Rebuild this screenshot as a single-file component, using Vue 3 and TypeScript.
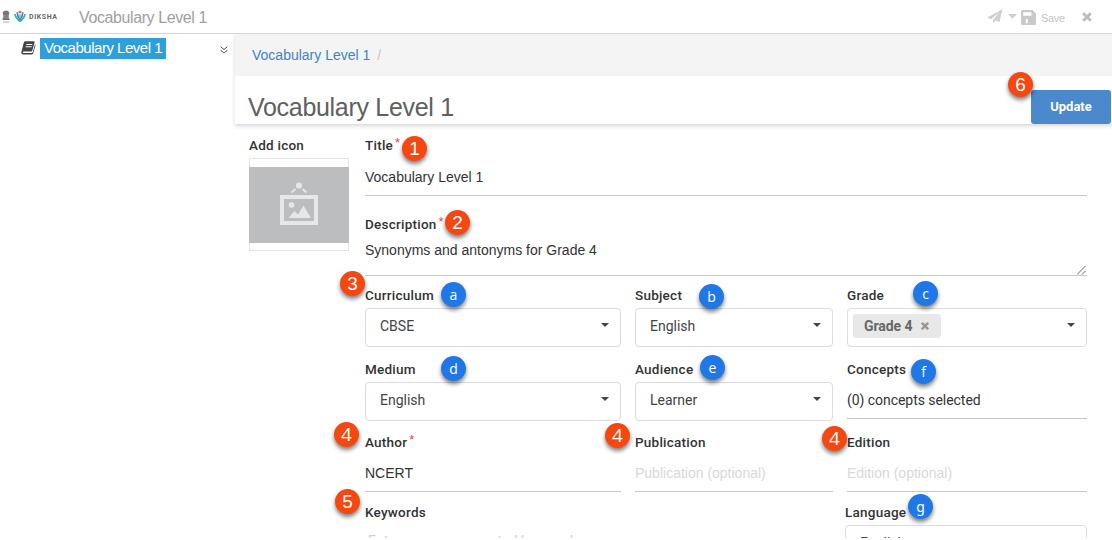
<script setup lang="ts">
interface Badge {
  text: string
  x: number
  y: number
  kind: 'step' | 'part'
}

const badges: Badge[] = [
  { text: '1', x: 402, y: 136, kind: 'step' },
  { text: '2', x: 445, y: 210, kind: 'step' },
  { text: '3', x: 340, y: 271, kind: 'step' },
  { text: '4', x: 334, y: 422, kind: 'step' },
  { text: '4', x: 605, y: 423, kind: 'step' },
  { text: '4', x: 822, y: 426, kind: 'step' },
  { text: '5', x: 335, y: 489, kind: 'step' },
  { text: '6', x: 1008, y: 72, kind: 'step' },
  { text: 'a', x: 441, y: 282, kind: 'part' },
  { text: 'b', x: 699, y: 284, kind: 'part' },
  { text: 'c', x: 913, y: 281, kind: 'part' },
  { text: 'd', x: 441, y: 356, kind: 'part' },
  { text: 'e', x: 700, y: 355, kind: 'part' },
  { text: 'f', x: 911, y: 359, kind: 'part' },
  { text: 'g', x: 908, y: 494, kind: 'part' },
]
</script>

<template>
  <div class="page">
    <header class="topbar">
      <svg class="emblem" width="8" height="14" viewBox="0 0 8 14">
        <path d="M.8 2.500 2 .800h4L7.200 2.500 6.800 5H1.200z" fill="#777" />
        <path d="M1.200 5h5.600v3.300H1.200z" fill="#858585" />
        <path d="M.6 8.300h6.800v1.600H.6z" fill="#5c5c5c" />
        <path d="M1 12h6" stroke="#aaa" stroke-width="1" />
      </svg>
      <svg class="logo" width="12" height="13" viewBox="0 0 12 13">
        <path d="M1 4c.2 3.500 2 5 5 7.500M11 4c-.2 3.500-2 5-5 7.500" stroke="#36b0bd" stroke-width="1.800" fill="none" />
        <path d="M3.500 4c0 2.500 1 4 2.500 5.500C7.500 8 8.500 6.500 8.500 4" stroke="#3274b9" stroke-width="1.500" fill="none" />
        <path d="M6 4.500v4.500" stroke="#77a66a" stroke-width="1.300" />
        <circle cx="6" cy="1.900" r="1.500" fill="#e77249" />
        <circle cx="3.300" cy="3" r="1" fill="#4686c5" />
        <circle cx="8.700" cy="3" r="1" fill="#4686c5" />
      </svg>
      <span class="brand">DIKSHA</span>
      <span class="doc-name">Vocabulary Level 1</span>
      <div class="actions">
        <svg class="plane" width="16" height="15" viewBox="0 0 16 15">
          <path d="M15.500.3.3 8.500l3.900 1.700 8.400-7.200-6.600 8V14.500l2.500-3 4 1.600z" fill="#cfcfcf" />
        </svg>
        <svg class="down" width="9" height="5" viewBox="0 0 9 5"><path d="M0 0h9L4.500 4.800z" fill="#cfcfcf" /></svg>
        <svg class="disk" width="15" height="15" viewBox="0 0 15 15">
          <path fill-rule="evenodd" d="M1.500 0h10L15 3.500v10c0 .9-.6 1.500-1.500 1.500h-12C.6 15 0 14.400 0 13.500v-12C0 .6.600 0 1.500 0zM2.200 2.200v3.500h8.300V2.200zM4.800 9v4.200h2V9z" fill="#c9c9c9" />
        </svg>
        <span class="save">Save</span>
        <svg class="close" width="10" height="10" viewBox="0 0 10 10"><path d="M1.200 1.200l7.600 7.600M8.800 1.200 1.200 8.800" stroke="#bdbdbd" stroke-width="3" /></svg>
      </div>
    </header>

    <div class="body">
      <aside class="tree">
        <svg class="book" width="15" height="14" viewBox="0 0 15 14">
          <path fill-rule="evenodd" d="M4.300.3h8.200c1 0 1.300.6 1.100 1.300l-2.300 8c-.2.600-.7 1-1.300 1H2.500c-1 0-1 1.300 0 1.300h8.300c.5 0 .8-.3 1-.8L14 3.300c.5.400.6.800.4 1.400l-2.100 7.400c-.2.800-.9 1.400-1.700 1.400H2.200C.8 13.500 0 12.400.4 11L2.700 2C3 .9 3.500.3 4.300.3zM5.500 3l-.3 1h6l.3-1zM4.800 5.300l-.3 1h6l.3-1z" fill="#444" />
        </svg>
        <span class="node">Vocabulary Level 1</span>
        <svg class="expand" width="8" height="8" viewBox="0 0 8 8">
          <path d="M.6.7 4 3.500 7.400.7M.6 4.200 4 7l3.400-2.800" fill="none" stroke="#555" stroke-width="1" />
        </svg>
      </aside>

      <main class="main">
        <div class="head">
          <nav class="crumbs"><a>Vocabulary Level 1</a><i>/</i></nav>
          <div class="titlebar">
            <h1>Vocabulary Level 1</h1>
            <button class="update">Update</button>
          </div>
        </div>

        <div class="form">
          <section class="icon-col">
            <label>Add icon</label>
            <div class="thumb">
              <svg width="100" height="76" viewBox="0 0 100 76">
                <rect width="100" height="76" fill="#bcbdbf" />
                <g fill="none" stroke="#e6e7e8">
                  <rect x="33" y="30" width="34" height="26" stroke-width="4" />
                  <path d="M46.500 22l-4 3.500M53.500 22l4 3.500" stroke-width="2" />
                </g>
                <circle cx="50" cy="18.500" r="3.100" fill="#e6e7e8" />
                <circle cx="42.500" cy="38" r="2.800" fill="#e6e7e8" />
                <path d="M39.500 51l6-7 3.500 3.500 5.500-9L62 51z" fill="#e6e7e8" />
              </svg>
            </div>
          </section>

          <section class="fields">
            <div class="field title-f">
              <label>Title<b class="req">*</b></label>
              <div class="value arial vt">Vocabulary Level 1</div>
            </div>
            <div class="field desc-f">
              <label>Description<b class="req">*</b></label>
              <div class="value arial vd">Synonyms and antonyms for Grade 4</div>
              <svg class="grip" width="9" height="9" viewBox="0 0 9 9"><path d="M0 8.500 8.500 0M5 8.500 8.500 5" stroke="#666" stroke-width="1" /></svg>
            </div>

            <div class="row">
              <div class="field"><label>Curriculum</label><div class="select"><span>CBSE</span><i class="caret" /></div></div>
              <div class="field"><label>Subject</label><div class="select"><span>English</span><i class="caret" /></div></div>
              <div class="field">
                <label>Grade</label>
                <div class="select multi">
                  <span class="chip">Grade 4<svg width="8" height="8" viewBox="0 0 8 8"><path d="M.8.800l6.400 6.400M7.200.800.8 7.200" stroke="#979797" stroke-width="2.400" /></svg></span>
                  <i class="caret" />
                </div>
              </div>
            </div>

            <div class="row second">
              <div class="field"><label>Medium</label><div class="select"><span>English</span><i class="caret" /></div></div>
              <div class="field"><label>Audience</label><div class="select"><span>Learner</span><i class="caret" /></div></div>
              <div class="field"><label>Concepts</label><div class="line concepts">(0) concepts selected</div></div>
            </div>

            <div class="row inputs">
              <div class="field"><label>Author<b class="req">*</b></label><div class="line arial">NCERT</div></div>
              <div class="field"><label>Publication</label><div class="line arial hint">Publication (optional)</div></div>
              <div class="field"><label>Edition</label><div class="line arial hint">Edition (optional)</div></div>
            </div>

            <div class="row last">
              <div class="field"><label>Keywords</label><div class="kw">Enter comma separated keywords</div></div>
              <div class="field"><label>Language</label><div class="select"><span>English</span><i class="caret" /></div></div>
            </div>
          </section>
        </div>
      </main>
    </div>

    <span
      v-for="(b, i) in badges"
      :key="i"
      class="badge"
      :class="[b.kind, 'c' + b.text]"
      :style="{ left: b.x + 'px', top: b.y + 'px' }"
    >{{ b.text }}</span>
  </div>
</template>

<style>
body { background: #fff; overflow: hidden; }
</style>

<style scoped>
* { box-sizing: border-box; }
.page {
  position: relative; width: 1112px; height: 538px; overflow: hidden; background: #fff;
  font-family: Roboto, "Liberation Sans", sans-serif; font-size: 14px; color: #333;
}
.topbar { display: flex; align-items: center; height: 34px; border-bottom: 1px solid #d4d4d5; padding-left: 2px; }
.emblem { margin-right: 4px; }
.logo { margin-right: 3px; margin-top: -1px; }
.brand { width: 50px; font: 700 7px/10px Roboto, sans-serif; letter-spacing: .6px; color: #666; }
.doc-name { font: 16px/20px "Liberation Sans", Arial, sans-serif; color: #a0a0a0; letter-spacing: -.4px; padding-top: 2px; }
.actions { display: flex; align-items: center; margin-left: auto; padding-right: 20px; }
.plane { margin-right: 5px; }
.down { margin-right: 4px; margin-top: -1px; }
.disk { margin-top: 2px; }
.save { font: 11px/14px "Liberation Sans", Arial, sans-serif; color: #c4c4c4; margin: 2px 16px 0 5px; width: 25px; letter-spacing: -.3px; }
.close { margin-top: 1px; }
.body { display: flex; }
.tree { display: flex; align-items: flex-start; width: 235px; padding: 4px 7px 0 21px; }
.book { margin: 3px 4px 0 0; }
.node { width: 126px; height: 21px; padding-left: 4px; background: #2e9fdb; color: #fff; font: 15px/20px "Liberation Sans", Arial, sans-serif; letter-spacing: -.48px; white-space: nowrap; }
.expand { margin: 8px 0 0 auto; }
.main { width: 877px; }
.head { height: 90px; box-shadow: 0 2px 4px rgba(34, 36, 38, .18); clip-path: inset(0 0 -8px -6px); }
.crumbs { height: 42px; padding-left: 17px; background: #f4f4f4; font: 14px/42px "Liberation Sans", Arial, sans-serif; color: #4183c4; }
.crumbs i { font-style: normal; color: #c4c4c4; margin-left: 7px; }
.titlebar { display: flex; justify-content: space-between; align-items: flex-end; height: 48px; background: #fff; padding: 0 1px 0 13px; }
h1 { margin: 0; font: 400 25px/33px "Liberation Sans", Arial, sans-serif; color: #606060; letter-spacing: -.3px; }
.update { width: 80px; height: 34px; border: 0; border-radius: 3px; padding: 0; background: #4a89cc; color: #fff; font: 700 13px/34px Roboto, sans-serif; }
.form { display: flex; gap: 16px; padding: 12px 0 0 14px; }
label { display: block; height: 20px; font: 500 13.5px/18px Roboto, sans-serif; letter-spacing: .24px; color: #333; white-space: nowrap; }
.req { color: #f0403c; font: 400 13px/10px "Liberation Sans", sans-serif; letter-spacing: 0; margin-left: 2px; position: relative; top: -3px; }
.icon-col { width: 100px; }
.thumb { height: 93px; margin-top: 2px; border: 1px solid #e4e4e4; display: flex; align-items: center; justify-content: center; }
.thumb svg { flex: none; }
.fields { width: 722px; }
.arial { font-family: "Liberation Sans", Arial, sans-serif; }
.title-f { height: 60px; border-bottom: 1px solid #c8c8c8; }
.value { line-height: 20px; }
.vt { margin-top: 11px; }
.desc-f { position: relative; height: 61px; margin-top: 19px; border-bottom: 1px solid #c8c8c8; }
.vd { margin-top: 5px; }
.grip { position: absolute; right: 1px; bottom: 0; }
.row { display: grid; grid-template-columns: 256px 198px 240px; column-gap: 14px; height: 74px; }
.desc-f + .row { margin-top: 10px; }
.second { height: 73px; }
.select { display: flex; align-items: center; justify-content: space-between; height: 39px; margin-top: 2px; padding: 0 11px 4px 14px; border: 1px solid #dcdcdd; border-radius: 4px; background: #fff; color: #444; }
.caret { width: 0; height: 0; border: 4px solid transparent; border-top-color: #444; border-bottom: 0; margin-top: -1px; }
.multi { padding-left: 5px; }
.chip { display: flex; align-items: center; height: 24px; width: 88px; padding-left: 11px; border-radius: 3px; background: #e8e8e8; color: #666; font: 700 14px/22px Roboto, sans-serif; letter-spacing: -.05px; }
.chip svg { margin-left: 8px; }
.line { border-bottom: 1px solid #c8c8c8; line-height: 20px; white-space: nowrap; }
.concepts { margin-top: 2px; height: 37px; padding-top: 8px; letter-spacing: -.05px; }
.inputs { height: 70px; }
.inputs .line { height: 37px; padding-top: 8px; margin-top: 2px; }
.hint { color: #d8d8d8; }
.last { grid-template-columns: 466px 242px; }
.kw { padding: 8px 0 0 3px; line-height: 20px; color: #cfcfcf; letter-spacing: .03px; }
.badge { position: absolute; width: 25px; height: 25px; border-radius: 50%; color: #fff; text-align: center; box-shadow: 0 3px 4px rgba(0, 0, 0, .5); }
.step { background: #f54710; font: 19px/25px "Liberation Sans", sans-serif; }
.c4 { font-family: "Open Sans", sans-serif; font-size: 19px; }
.part { background: #2078e6; font: 14px/25px "Open Sans", sans-serif; }
.cg { font-family: "Noto Sans", sans-serif; }
</style>
